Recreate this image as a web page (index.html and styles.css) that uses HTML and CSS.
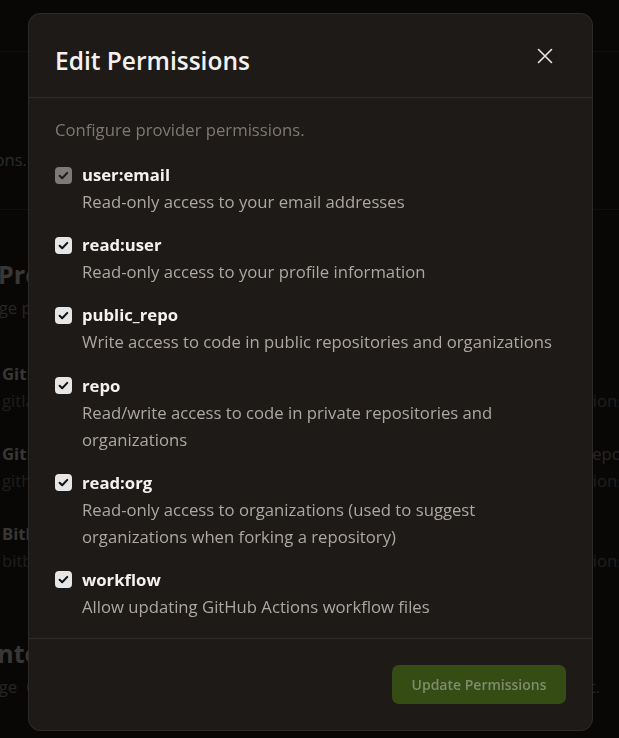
FILE: index.html
```html
<!DOCTYPE html>
<html lang="en">
<head>
<meta charset="utf-8">
<title>Edit Permissions</title>
<link rel="stylesheet" href="styles.css">
</head>
<body>
<div class="page">
  <div class="topbar"></div>
  <section class="sec sec-first">
    <p class="sec-text">Connect your account and manage provider permissions.</p>
  </section>
  <section class="sec sec-prov">
    <h2 class="sec-title">Git Providers</h2>
    <p class="sec-sub">Manage providers and their permissions.</p>
    <ul class="prov-list">
      <li class="prov">
        <div class="prov-info"><span class="prov-name">GitLab</span><span class="prov-host">gitlab.com</span></div>
        <div class="prov-side"><span class="prov-perm">&nbsp;</span><span class="prov-dim">Permissions</span></div>
      </li>
      <li class="prov">
        <div class="prov-info"><span class="prov-name">GitHub</span><span class="prov-host">github.com</span></div>
        <div class="prov-side"><span class="prov-perm">public_repo</span><span class="prov-dim">Permissions</span></div>
      </li>
      <li class="prov">
        <div class="prov-info"><span class="prov-name">Bitbucket</span><span class="prov-host">bitbucket.org</span></div>
        <div class="prov-side"><span class="prov-perm">&nbsp;</span><span class="prov-dim">Permissions</span></div>
      </li>
    </ul>
  </section>
  <section class="sec sec-int">
    <h2 class="sec-title int-title">Integrations</h2>
    <p class="sec-sub int-sub">Manage Git integrations for self-hosted GitLab, GitHub and Bitbucket account.</p>
  </section>
</div>

<div class="backdrop"></div>

<div class="modal" role="dialog" aria-labelledby="dlg-title">
  <header class="modal-head">
    <h1 id="dlg-title" class="modal-title">Edit Permissions</h1>
    <button class="close" aria-label="Close">
      <svg width="16" height="16" viewBox="0 0 16 16"><path d="M1.5 1.5 L14.5 14.5 M14.5 1.5 L1.5 14.5" stroke="#e8e6e3" stroke-width="1.6" stroke-linecap="round" fill="none"/></svg>
    </button>
  </header>
  <div class="modal-body">
    <p class="intro">Configure provider permissions.</p>
    <ul class="perms">
      <li class="perm">
        <span class="cb cb-disabled"><svg viewBox="0 0 17 17"><path d="M4.6 8.8 L7.2 11.3 L12.3 5.9" stroke="#1d1b1a" stroke-width="2" fill="none" stroke-linecap="round" stroke-linejoin="round"/></svg></span>
        <div class="perm-text"><span class="perm-name">user:email</span><span class="perm-desc">Read-only access to your email addresses</span></div>
      </li>
      <li class="perm">
        <span class="cb"><svg viewBox="0 0 17 17"><path d="M4.6 8.8 L7.2 11.3 L12.3 5.9" stroke="#111" stroke-width="2" fill="none" stroke-linecap="round" stroke-linejoin="round"/></svg></span>
        <div class="perm-text"><span class="perm-name">read:user</span><span class="perm-desc">Read-only access to your profile information</span></div>
      </li>
      <li class="perm">
        <span class="cb"><svg viewBox="0 0 17 17"><path d="M4.6 8.8 L7.2 11.3 L12.3 5.9" stroke="#111" stroke-width="2" fill="none" stroke-linecap="round" stroke-linejoin="round"/></svg></span>
        <div class="perm-text"><span class="perm-name">public_repo</span><span class="perm-desc">Write access to code in public repositories and organizations</span></div>
      </li>
      <li class="perm">
        <span class="cb"><svg viewBox="0 0 17 17"><path d="M4.6 8.8 L7.2 11.3 L12.3 5.9" stroke="#111" stroke-width="2" fill="none" stroke-linecap="round" stroke-linejoin="round"/></svg></span>
        <div class="perm-text"><span class="perm-name">repo</span><span class="perm-desc">Read/write access to code in private repositories and organizations</span></div>
      </li>
      <li class="perm">
        <span class="cb"><svg viewBox="0 0 17 17"><path d="M4.6 8.8 L7.2 11.3 L12.3 5.9" stroke="#111" stroke-width="2" fill="none" stroke-linecap="round" stroke-linejoin="round"/></svg></span>
        <div class="perm-text"><span class="perm-name">read:org</span><span class="perm-desc">Read-only access to organizations (used to suggest organizations when forking a repository)</span></div>
      </li>
      <li class="perm">
        <span class="cb"><svg viewBox="0 0 17 17"><path d="M4.6 8.8 L7.2 11.3 L12.3 5.9" stroke="#111" stroke-width="2" fill="none" stroke-linecap="round" stroke-linejoin="round"/></svg></span>
        <div class="perm-text"><span class="perm-name">workflow</span><span class="perm-desc">Allow updating GitHub Actions workflow files</span></div>
      </li>
    </ul>
  </div>
  <footer class="modal-foot">
    <button class="btn-primary" disabled>Update Permissions</button>
  </footer>
</div>
</body>
</html>
```
FILE: styles.css
```css
* { box-sizing: border-box; }
html, body { margin: 0; padding: 0; }
body {
  width: 619px;
  height: 738px;
  overflow: hidden;
  background: #1e1a17;
  font-family: "Open Sans", "Noto Sans", sans-serif;
  color: #e8e6e3;
}

/* background page (dimmed behind the dialog) */
.page {
  width: 760px;
  margin-left: -45px;
}
.topbar {
  height: 52px;
  border-bottom: 1px solid #3a3633;
}
.sec { border-bottom: 1px solid #3a3633; }
.sec-first {
  height: 158px;
  display: flex;
  align-items: flex-start;
  justify-content: flex-end;
  padding-top: 94px;
  padding-right: 688px;
}
.sec-text { margin: 0; font-size: 16.7px; line-height: 27px; color: #a09a94; white-space: nowrap; }
.sec-prov { padding: 47px 0 0 45px; border-bottom: none; }
.sec-title {
  margin: 0 0 0 -45px;
  font-size: 25px;
  font-weight: 700;
  color: #c8c4c0;
  line-height: 34px;
  white-space: nowrap;
}
.sec-sub {
  margin: 3px 0 0 -45px;
  font-size: 16.7px;
  color: #8a847f;
  line-height: 27px;
  white-space: nowrap;
}
.prov-list {
  list-style: none;
  margin: 40px 0 0;
  padding: 0;
  display: flex;
  flex-direction: column;
  gap: 27px;
}
.prov { display: flex; align-items: center; padding-left: 2px; }
.prov-info { display: flex; flex-direction: column; width: 529px; }
.prov-name { font-size: 16.7px; font-weight: 700; color: #c8c4c0; line-height: 26px; }
.prov-host { font-size: 16.7px; color: #6f6a66; line-height: 27px; }
.prov-side { display: flex; flex-direction: column; align-items: flex-start; }
.prov-perm { font-size: 16.7px; color: #8a847f; line-height: 26px; white-space: nowrap; }
.prov-dim { font-size: 16.7px; color: #6f6a66; line-height: 27px; white-space: nowrap; }
.sec-int { padding: 62px 0 0 40px; border-bottom: none; }
.int-title { margin-left: -6px; }
.int-sub {
  margin-left: -40px;
  width: 645px;
  white-space: normal;
  text-align: justify;
  text-align-last: justify;
}

.backdrop {
  position: fixed;
  inset: 0;
  background: rgba(0, 0, 0, 0.72);
}

/* dialog */
.modal {
  position: fixed;
  left: 28px;
  top: 13px;
  width: 565px;
  height: 718px;
  background: #1e1a17;
  border: 1px solid #2e2a27;
  border-radius: 12px;
  display: flex;
  flex-direction: column;
}
.modal-head {
  display: flex;
  justify-content: space-between;
  align-items: flex-start;
  padding: 31px 26px 20px 26px;
  border-bottom: 1px solid #2e2a27;
}
.modal-title {
  margin: 0;
  font-size: 24.5px;
  font-weight: 600;
  line-height: 32px;
  color: #f4f2f0;
}
.close {
  background: none;
  border: 0;
  padding: 0;
  margin: 3px 13px 0 0;
  width: 16px;
  height: 16px;
  display: flex;
  cursor: pointer;
}
.modal-body {
  flex: 1;
  padding: 18px 26px 15px 26px;
}
.intro {
  margin: 0 0 19px;
  font-size: 16.7px;
  line-height: 27px;
  color: #7d7873;
}
.perms {
  list-style: none;
  margin: 0;
  padding: 0;
  display: flex;
  flex-direction: column;
  gap: 17.2px;
}
.perm {
  display: flex;
  gap: 10px;
  align-items: flex-start;
}
.cb {
  flex: none;
  width: 17px;
  height: 17px;
  margin-top: 4.5px;
  border-radius: 4px;
  background: #e6e6e6;
  display: flex;
}
.cb svg { width: 17px; height: 17px; }
.cb-disabled { background: #7c7b7a; }
.perm-text { display: flex; flex-direction: column; }
.perm-name {
  font-size: 16.7px;
  font-weight: 700;
  line-height: 26px;
  color: #f4f2f0;
}
.perm-desc {
  font-size: 16.7px;
  line-height: 27px;
  color: #aca7a1;
}
.modal-foot {
  display: flex;
  justify-content: flex-end;
  padding: 26px;
  border-top: 1px solid #2e2a27;
}
.btn-primary {
  height: 39px;
  padding: 0 19.5px;
  border: 0;
  border-radius: 7px;
  background: #354c15;
  color: #7f8c6d;
  font-family: "Open Sans", "Noto Sans", sans-serif;
  font-size: 14px;
  font-weight: 600;
}
```
